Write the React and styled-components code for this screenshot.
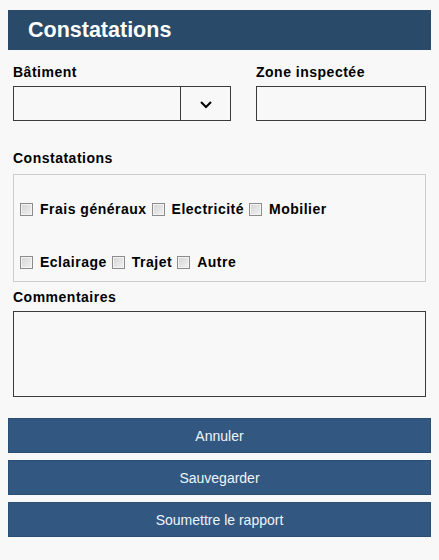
import React from "react";
import styled, { createGlobalStyle } from "styled-components";

const GlobalStyle = createGlobalStyle`
  * {
    box-sizing: border-box;
  }
  body {
    margin: 0;
    background: #f8f8f8;
    font-family: "Liberation Sans", Arial, sans-serif;
  }
`;

const Page = styled.div`
  padding: 10px 8px 23px 8px;
`;

const Header = styled.div`
  height: 40px;
  background: #294a69;
  display: flex;
  align-items: center;
  padding-left: 20px;

  h1 {
    margin: 0;
    color: #ffffff;
    font-size: 21.5px;
    font-weight: 700;
  }
`;

const Form = styled.div`
  padding: 14px 5px 0 5px;
  display: flex;
  flex-direction: column;
`;

const TopRow = styled.div`
  display: grid;
  grid-template-columns: 218px 1fr;
  column-gap: 25px;
`;

const Field = styled.div`
  display: flex;
  flex-direction: column;
`;

const Label = styled.div`
  font-size: 14px;
  line-height: 16px;
  font-weight: 700;
  letter-spacing: 0.5px;
  color: #000;
  margin-top: ${(p) => p.$top || 0}px;
  margin-bottom: ${(p) => p.$bottom || 6}px;
`;

const Select = styled.div`
  height: 35px;
  border: 1px solid #3b3b3b;
  display: flex;

  .value {
    flex: 1;
  }
  .arrow {
    width: 50px;
    border-left: 1px solid #3b3b3b;
    display: flex;
    align-items: center;
    justify-content: center;
    padding-top: 2px;
  }
`;

const TextInput = styled.div`
  height: 35px;
  border: 1px solid #3b3b3b;
`;

const CheckBox = styled.div`
  border: 1px solid #cccccc;
  padding: 26px 6px 11px 6px;
  display: flex;
  flex-direction: column;
  row-gap: 37px;
`;

const CheckRow = styled.div`
  display: flex;
  gap: 5px;
`;

const CheckItem = styled.label`
  display: inline-flex;
  align-items: center;
  height: 16px;
  font-size: 14px;
  font-weight: 700;
  letter-spacing: 0.5px;
  color: #000;

  input {
    appearance: none;
    width: 13px;
    height: 13px;
    margin: 0 7px 0 0;
    border: 1px solid #8c8c8c;
    background: linear-gradient(135deg, #d4d4d4 0%, #f2f2f2 100%);
    box-shadow: inset 0 0 0 1px #f4f4f4;
  }
`;

const Comments = styled.div`
  height: 86px;
  border: 1px solid #3b3b3b;
`;

const Buttons = styled.div`
  margin-top: 21px;
  display: flex;
  flex-direction: column;
  gap: 7px;
`;

const Button = styled.button`
  height: 35px;
  width: 100%;
  border: 1px solid #2a4d72;
  background: #325881;
  color: #eef4fb;
  font-family: "Liberation Sans", Arial, sans-serif;
  font-size: 14px;
  cursor: pointer;
`;

const rows = [
  ["Frais généraux", "Electricité", "Mobilier"],
  ["Eclairage", "Trajet", "Autre"],
];

export default function App() {
  return (
    <>
      <GlobalStyle />
      <Page>
        <Header>
          <h1>Constatations</h1>
        </Header>
        <Form>
          <TopRow>
            <Field>
              <Label>Bâtiment</Label>
              <Select>
                <div className="value"></div>
                <div className="arrow">
                  <svg width="12" height="8" viewBox="0 0 12 8">
                    <polyline
                      points="1,1 6,6 11,1"
                      fill="none"
                      stroke="#000"
                      strokeWidth="2"
                    />
                  </svg>
                </div>
              </Select>
            </Field>
            <Field>
              <Label>Zone inspectée</Label>
              <TextInput />
            </Field>
          </TopRow>

          <Label $top={29} $bottom={8}>
            Constatations
          </Label>
          <CheckBox>
            {rows.map((row, i) => (
              <CheckRow key={i}>
                {row.map((item) => (
                  <CheckItem key={item}>
                    <input type="checkbox" />
                    {item}
                  </CheckItem>
                ))}
              </CheckRow>
            ))}
          </CheckBox>

          <Label $top={7}>Commentaires</Label>
          <Comments />
        </Form>
        <Buttons>
          <Button>Annuler</Button>
          <Button>Sauvegarder</Button>
          <Button>Soumettre le rapport</Button>
        </Buttons>
      </Page>
    </>
  );
}
